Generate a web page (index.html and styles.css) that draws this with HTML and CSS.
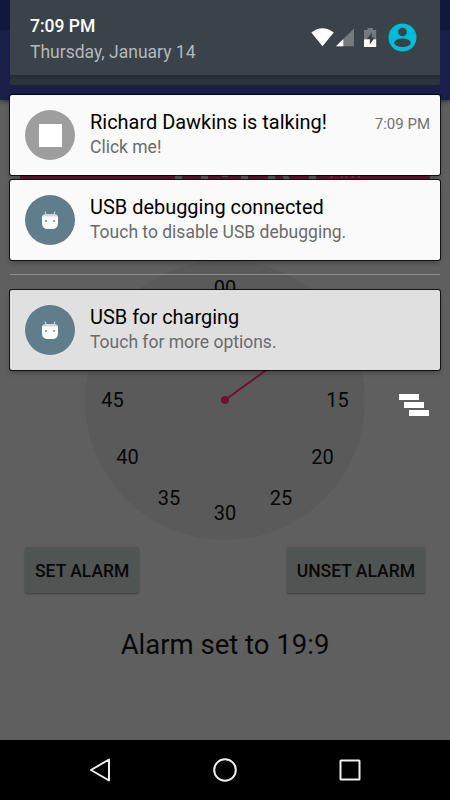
FILE: index.html
```html
<!DOCTYPE html>
<html lang="en">
<head>
    <meta charset="UTF-8">
    <meta name="viewport" content="width=device-width, initial-scale=1.0">
    <title>Alarm</title>
    <link rel="stylesheet" href="styles.css">
</head>
<body>
    <div class="phone">
        <!-- Alarm app, dimmed -->
        <div class="app">
            <div class="app-status"></div>
            <div class="app-bar"></div>
            <div class="picker-header">
                <svg width="410" height="79" viewBox="20 100 410 79">
                    <g fill="#59605c">
                        <rect x="175" y="110" width="7" height="69"/>
                        <rect x="201" y="110" width="7" height="69"/>
                        <rect x="222" y="174" width="6" height="3"/>
                        <rect x="241" y="110" width="7" height="69"/>
                        <rect x="268" y="110" width="7" height="69"/>
                        <path d="M281 174h6l3 5h-6z"/>
                        <rect x="309" y="110" width="7" height="69"/>
                    </g>
                    <text class="ampm" x="330" y="178">AM</text>
                </svg>
            </div>
            <svg class="clock" width="280" height="280" viewBox="-140 -140 280 280">
                <circle r="140" fill="#5a5a5a"/>
                <g class="clock-numbers">
                    <text x="0" y="-105.500">00</text>
                    <text x="112.500" y="7">15</text>
                    <text x="97.500" y="63.500">20</text>
                    <text x="56" y="104.500">25</text>
                    <text x="0" y="119.500">30</text>
                    <text x="-56" y="104.500">35</text>
                    <text x="-97.500" y="63.500">40</text>
                    <text x="-112.500" y="7">45</text>
                </g>
                <path d="M0 0L91 -66" stroke="#6e1233" stroke-width="2"/>
                <circle r="4" fill="#6e1233"/>
            </svg>
            <div class="buttons">
                <button class="btn">SET ALARM</button>
                <button class="btn">UNSET ALARM</button>
            </div>
            <p class="alarm-text">Alarm set to 19:9</p>
        </div>

        <!-- Notification shade -->
        <div class="shade">
            <div class="quick-peek">
                <div class="shade-header">
                    <div class="date-time">
                        <div class="time">7:09 PM</div>
                        <div class="date">Thursday, January 14</div>
                    </div>
                    <svg class="status-icons" width="110" height="30" viewBox="308 22 110 30">
                        <path d="M311.300 32.500Q322.500 24 333.800 32.500L322.500 46.200z" fill="#fff"/>
                        <path d="M354 28.500V46.200H336z" fill="#747b7f"/>
                        <path d="M343.300 39V46.200H336z" fill="#fff"/>
                        <path d="M364 30h3.500v-2h5.500v2h3.200v9.500H364z" fill="#747b7f"/>
                        <path d="M364 39.300h12.200v7.700H364z" fill="#fff"/>
                        <path d="M371.800 32.500l-5 6.500h3v5.500l5-7h-3z" fill="#384248"/>
                        <circle cx="402.500" cy="37.500" r="14" fill="#00bcd7"/>
                        <circle cx="402.500" cy="32" r="4.300" fill="#384248"/>
                        <ellipse cx="402.500" cy="42.700" rx="8.300" ry="4.300" fill="#384248"/>
                    </svg>
                </div>
            </div>

            <div class="notification">
                <div class="icon icon-gray"><div class="stop"></div></div>
                <div class="content">
                    <div class="title">Richard Dawkins is talking!</div>
                    <div class="text">Click me!</div>
                </div>
                <div class="when">7:09 PM</div>
            </div>
            <div class="notification">
                <div class="icon">
                    <svg width="16" height="19" viewBox="0 0 16 19">
                        <path d="M3 .5l1.200 3M13 .5l-1.200 3" stroke="#dfe6e9" stroke-width="1"/>
                        <path d="M0 6Q0 3 4 3H12Q16 3 16 6z" fill="#cfd8dc"/>
                        <path d="M0 5.500H16V12Q16 18 10 18H6Q0 18 0 12z" fill="#fff"/>
                        <circle cx="4" cy="10" r=".9" fill="#607d8b"/>
                        <circle cx="12" cy="10" r=".9" fill="#607d8b"/>
                    </svg>
                </div>
                <div class="content">
                    <div class="title">USB debugging connected</div>
                    <div class="text">Touch to disable USB debugging.</div>
                </div>
            </div>
            <div class="divider"></div>
            <div class="notification low">
                <div class="icon">
                    <svg width="16" height="19" viewBox="0 0 16 19">
                        <path d="M3 .5l1.200 3M13 .5l-1.200 3" stroke="#dfe6e9" stroke-width="1"/>
                        <path d="M0 6Q0 3 4 3H12Q16 3 16 6z" fill="#cfd8dc"/>
                        <path d="M0 5.500H16V12Q16 18 10 18H6Q0 18 0 12z" fill="#fff"/>
                        <circle cx="4" cy="10" r=".9" fill="#607d8b"/>
                        <circle cx="12" cy="10" r=".9" fill="#607d8b"/>
                    </svg>
                </div>
                <div class="content">
                    <div class="title">USB for charging</div>
                    <div class="text">Touch for more options.</div>
                </div>
            </div>
            <svg class="clear-all" width="30" height="23" viewBox="0 0 30 23">
                <path d="M0 0h20v6H0zM5 8h20v6H5zM10 16h20v6H10z" fill="#fff"/>
            </svg>
        </div>

        <div class="nav-bar">
            <svg width="24" height="28" viewBox="0 0 24 28">
                <path d="M3 14L21 3.500V24.500z"/>
            </svg>
            <svg width="24" height="28" viewBox="0 0 24 28">
                <circle cx="12" cy="14" r="10.800"/>
            </svg>
            <svg width="24" height="28" viewBox="0 0 24 28">
                <rect x="2.500" y="4.500" width="19" height="19" rx=".5"/>
            </svg>
        </div>
    </div>
</body>
</html>
```
FILE: styles.css
```css
body {
    margin: 0;
    font-family: Roboto, sans-serif;
    background-color: #000;
}
.phone {
    position: relative;
    display: flex;
    flex-direction: column;
    width: 450px;
    height: 800px;
    overflow: hidden;
}
.app {
    display: flex;
    flex-direction: column;
    height: 740px;
    background-color: #5f5f5f;
}
.app-status {
    height: 30px;
    background-color: #12173e;
}
.app-bar {
    height: 70px;
    background-color: #191f48;
    box-shadow: 0 2px 4px rgba(0,0,0,0.4);
}
.picker-header {
    height: 79px;
    margin: 0 20px;
    background-color: #66142f;
}
.picker-header svg {
    display: block;
}
.ampm {
    font-size: 21px;
    fill: #59454b;
}
.clock {
    align-self: center;
    margin-top: 81px;
    flex-shrink: 0;
}
.clock-numbers {
    font-size: 20px;
    text-anchor: middle;
    fill: #060606;
}
.buttons {
    display: flex;
    justify-content: space-between;
    margin: 7px 25px 0;
}
.btn {
    height: 46px;
    padding: 2px 10px 0;
    border: none;
    border-radius: 2px;
    background-color: #505453;
    color: #090909;
    font: 500 17.5px Roboto, sans-serif;
    box-shadow: 0 1px 2px rgba(0,0,0,0.35);
}
.alarm-text {
    margin: 35px 0 0;
    font-size: 27.5px;
    line-height: 34px;
    text-align: center;
    color: #080808;
}
/* The shade covers the app */
.shade {
    position: absolute;
    top: 0;
    left: 10px;
    width: 430px;
    display: flex;
    flex-direction: column;
}
.quick-peek {
    height: 85px;
    margin-bottom: 10px;
    border-radius: 0 0 2px 2px;
    background: linear-gradient(#222c30 75px, #29353a 80px);
}
.shade-header {
    display: flex;
    justify-content: space-between;
    height: 75px;
    background-color: #3a4349;
}
.date-time {
    padding: 15px 0 0 20px;
}
.time {
    font-size: 17.5px;
    font-weight: 500;
    line-height: 22px;
    color: #fff;
}
.date {
    margin-top: 3px;
    font-size: 17.5px;
    line-height: 24px;
    color: #b4b8ba;
}
.status-icons {
    margin: 22px 22px 0 0;
}
.notification {
    display: flex;
    box-sizing: border-box;
    height: 80px;
    margin-bottom: 5px;
    padding: 15px 10px 0 15px;
    border-radius: 2px;
    background-color: #fafafa;
    box-shadow: 0 0 0 1px rgba(0,0,0,0.8), 0 3px 5px rgba(0,0,0,0.25);
}
.low {
    background-color: #e0e0e0;
}
.icon {
    display: flex;
    align-items: center;
    justify-content: center;
    width: 50px;
    height: 50px;
    margin-right: 15px;
    border-radius: 50%;
    background-color: #607d8b;
}
.icon-gray {
    background-color: #9e9e9e;
}
.stop {
    width: 23px;
    height: 23px;
    background-color: #fff;
}
.content {
    flex: 1;
}
.title {
    font-size: 19.95px;
    line-height: 24px;
    color: #000;
}
.text {
    margin-top: 1px;
    font-size: 17.5px;
    line-height: 24px;
    color: #6b6b6b;
}
.when {
    margin-top: 4px;
    font-size: 15px;
    line-height: 20px;
    color: #717171;
}
.divider {
    height: 1px;
    margin: 9px 0 15px;
    background-color: #8e8e8e;
}
.clear-all {
    align-self: flex-end;
    margin: 19px 11px 0 0;
}
.nav-bar {
    display: flex;
    justify-content: space-between;
    align-items: center;
    height: 60px;
    padding: 0 88px;
    background-color: #000;
}
.nav-bar svg {
    fill: none;
    stroke: #eee;
    stroke-width: 2;
    stroke-linejoin: round;
}
```
